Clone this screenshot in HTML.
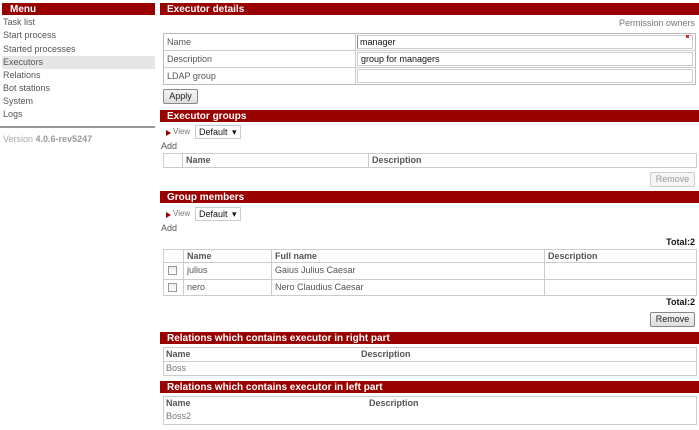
<!DOCTYPE html>
<html><head><style>
body{margin:0;width:699px;height:430px;background:#fff;font-family:"Liberation Sans",Arial,sans-serif;font-size:9px;color:#555;position:relative;overflow:hidden}
div,span{position:absolute;box-sizing:border-box}
.h{background:#990000;color:#fff;font-weight:bold;font-size:10px;line-height:12px;padding-left:7px;padding-top:1px;height:12px;overflow:visible}
.m{left:3px;line-height:13px}
.b{border:1px solid #ccc}
.th{font-weight:bold;color:#555}
.btn{border:1px solid #888;border-radius:2px;background:linear-gradient(#f6f6f6,#ddd);color:#222;text-align:center;line-height:13px;font-size:9px}
.sel{border:1px solid #ccc;background:#fff;color:#111;font-size:9px;line-height:12px;padding-left:3px}
.tri{width:0;height:0;border-left:5px solid #990000;border-top:3px solid transparent;border-bottom:3px solid transparent}
.cb{width:9px;height:9px;border:1px solid #999;background:linear-gradient(#eee,#fff)}
.ln{background:#ccc}
</style></head><body>
<div class="h" style="left:2px;top:3px;width:153px;padding-left:8px">Menu</div>
<div style="left:2px;top:56px;width:153px;height:13px;background:#e6e6e6"></div>
<div class="m" style="top:16px">Task list</div>
<div class="m" style="top:29px">Start process</div>
<div class="m" style="top:43px">Started processes</div>
<div class="m" style="top:56px">Executors</div>
<div class="m" style="top:69px">Relations</div>
<div class="m" style="top:82px">Bot stations</div>
<div class="m" style="top:95px">System</div>
<div class="m" style="top:108px">Logs</div>
<div style="left:0;top:126px;width:155px;height:2px;background:#999"></div>
<div style="left:3px;top:133px;color:#aaa;line-height:13px">Version <b style="font-weight:bold;color:#999">4.0.6-rev5247</b></div>

<div class="h" style="left:160px;top:3px;width:539px">Executor details</div>
<div style="right:4px;top:17px;color:#777;line-height:12px">Permission owners</div>
<div class="b" style="left:163px;top:33px;width:533px;height:52px;border-color:#bbb"></div>
<div class="ln" style="left:163px;top:50px;width:533px;height:1px"></div>
<div class="ln" style="left:163px;top:67px;width:533px;height:1px"></div>
<div class="ln" style="left:355px;top:33px;width:1px;height:52px"></div>
<div style="left:167px;top:36px;line-height:12px">Name</div>
<div style="left:167px;top:53px;line-height:12px">Description</div>
<div style="left:167px;top:70px;line-height:12px">LDAP group</div>
<div class="b" style="left:357px;top:35px;width:336px;height:14px;color:#111;padding-left:2px;line-height:12px;border-left:1px solid #888">manager</div>
<div style="left:686px;top:35px;width:3px;height:3px;background:#c33"></div>
<div class="b" style="left:357px;top:52px;width:336px;height:14px;color:#111;padding-left:3px;line-height:12px">group for managers</div>
<div class="b" style="left:357px;top:69px;width:336px;height:14px"></div>
<div class="btn" style="left:163px;top:89px;width:35px;height:15px;font-size:9px">Apply</div>

<div class="h" style="left:160px;top:110px;width:539px">Executor groups</div>
<div class="tri" style="left:166px;top:130px"></div>
<div style="left:173px;top:127px;font-size:8px;color:#777;line-height:10px">View</div>
<div class="sel" style="left:195px;top:125px;width:46px;height:14px">Default <span style="left:36px;top:0">▾</span></div>
<div style="left:161px;top:141px;line-height:11px">Add</div>
<div class="b" style="left:163px;top:153px;width:534px;height:15px"></div>
<div class="ln" style="left:182px;top:153px;width:1px;height:15px"></div>
<div class="ln" style="left:368px;top:153px;width:1px;height:15px"></div>
<div class="th" style="left:186px;top:155px;line-height:11px">Name</div>
<div class="th" style="left:372px;top:155px;line-height:11px">Description</div>
<div class="btn" style="left:650px;top:172px;width:45px;height:15px;color:#999;border-color:#ccc;background:#f6f6f6">Remove</div>

<div class="h" style="left:160px;top:191px;width:539px">Group members</div>
<div class="tri" style="left:166px;top:212px"></div>
<div style="left:173px;top:209px;font-size:8px;color:#777;line-height:10px">View</div>
<div class="sel" style="left:195px;top:207px;width:46px;height:14px">Default <span style="left:36px;top:0">▾</span></div>
<div style="left:161px;top:223px;line-height:11px">Add</div>
<div style="right:4px;top:237px;font-weight:bold;color:#111;line-height:11px">Total:2</div>
<div class="b" style="left:163px;top:249px;width:534px;height:47px"></div>
<div class="ln" style="left:163px;top:262px;width:534px;height:1px"></div>
<div class="ln" style="left:163px;top:279px;width:534px;height:1px"></div>
<div class="ln" style="left:183px;top:249px;width:1px;height:47px"></div>
<div class="ln" style="left:271px;top:249px;width:1px;height:47px"></div>
<div class="ln" style="left:544px;top:249px;width:1px;height:47px"></div>
<div class="th" style="left:187px;top:251px;line-height:11px">Name</div>
<div class="th" style="left:275px;top:251px;line-height:11px">Full name</div>
<div class="th" style="left:548px;top:251px;line-height:11px">Description</div>
<div class="cb" style="left:168px;top:266px"></div>
<div class="cb" style="left:168px;top:283px"></div>
<div style="left:187px;top:265px;line-height:11px">julius</div>
<div style="left:275px;top:265px;line-height:11px">Gaius Julius Caesar</div>
<div style="left:187px;top:282px;line-height:11px">nero</div>
<div style="left:275px;top:282px;line-height:11px">Nero Claudius Caesar</div>
<div style="right:4px;top:297px;font-weight:bold;color:#111;line-height:11px">Total:2</div>
<div class="btn" style="left:650px;top:312px;width:45px;height:15px">Remove</div>

<div class="h" style="left:160px;top:332px;width:539px">Relations which contains executor in right part</div>
<div class="b" style="left:163px;top:347px;width:534px;height:29px"></div>
<div class="ln" style="left:163px;top:361px;width:534px;height:1px"></div>
<div class="th" style="left:166px;top:349px;line-height:11px">Name</div>
<div class="th" style="left:361px;top:349px;line-height:11px">Description</div>
<div style="left:166px;top:363px;line-height:11px;color:#777">Boss</div>

<div class="h" style="left:160px;top:381px;width:539px">Relations which contains executor in left part</div>
<div class="b" style="left:163px;top:396px;width:534px;height:29px"></div>
<div class="th" style="left:166px;top:398px;line-height:11px">Name</div>
<div class="th" style="left:369px;top:398px;line-height:11px">Description</div>
<div style="left:166px;top:411px;line-height:11px;color:#777">Boss2</div>
</body></html>
